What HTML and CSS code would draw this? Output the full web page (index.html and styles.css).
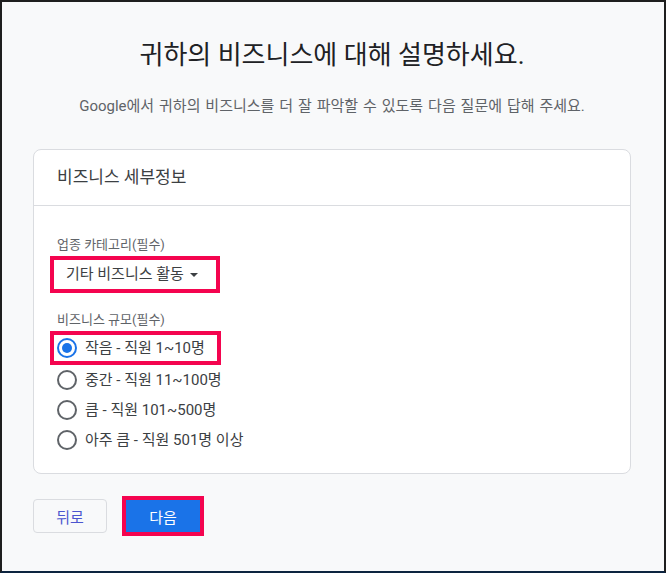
FILE: index.html
```html
<!DOCTYPE html>
<html lang="ko">
<head>
<meta charset="utf-8">
<title>비즈니스 세부정보</title>
<link rel="stylesheet" href="styles.css">
</head>
<body>
<div class="frame">
  <h1 class="title">귀하의 비즈니스에 대해 설명하세요.</h1>
  <p class="subtitle">Google에서 귀하의 비즈니스를 더 잘 파악할 수 있도록 다음 질문에 답해 주세요.</p>

  <section class="card">
    <div class="card-header">비즈니스 세부정보</div>
    <div class="card-body">
      <div class="label">업종 카테고리(필수)</div>
      <div class="highlight dropdown">
        <span class="dropdown-text">기타 비즈니스 활동</span>
        <span class="caret"></span>
      </div>

      <div class="label label-size">비즈니스 규모(필수)</div>
      <div class="highlight radio-box">
        <div class="radio-row">
          <span class="radio checked"></span>
          <span class="radio-text">작음 - 직원 1~10명</span>
        </div>
      </div>
      <div class="radio-row">
        <span class="radio"></span>
        <span class="radio-text">중간 - 직원 11~100명</span>
      </div>
      <div class="radio-row">
        <span class="radio"></span>
        <span class="radio-text">큼 - 직원 101~500명</span>
      </div>
      <div class="radio-row">
        <span class="radio"></span>
        <span class="radio-text">아주 큼 - 직원 501명 이상</span>
      </div>
    </div>
  </section>

  <div class="actions">
    <button class="btn-back">뒤로</button>
    <div class="highlight next-wrap">
      <button class="btn-next">다음</button>
    </div>
  </div>
</div>
</body>
</html>
```

FILE: styles.css
```css
* { box-sizing: border-box; }

html, body {
  margin: 0;
  padding: 0;
}

body {
  font-family: Roboto, "Noto Sans CJK KR", sans-serif;
  background: #f8f9fa;
}

.frame {
  width: 666px;
  height: 573px;
  border: 2px solid #1e1e1e;
  border-bottom-color: #0c2440;
  background: #f8f9fa;
  padding: 37px 33px 0 31px;
  overflow: hidden;
}

.title {
  margin: 0;
  font-size: 26px;
  line-height: 32px;
  font-weight: 400;
  color: #202124;
  text-align: center;
}

.subtitle {
  margin: 25px 0 0;
  font-size: 15px;
  line-height: 20px;
  color: #5f6368;
  text-align: center;
  word-spacing: 1.2px;
}

.card {
  margin-top: 33px;
  width: 598px;
  background: #fff;
  border: 1px solid #dadce0;
  border-radius: 8px;
}

.card-header {
  padding: 15px 23px 16px;
  font-size: 17px;
  line-height: 24px;
  color: #3c4043;
  border-bottom: 1px solid #dadce0;
}

.card-body {
  padding: 31px 23px 18px;
}

.label {
  font-size: 13px;
  line-height: 16px;
  color: #5f6368;
}

.label-size {
  margin-top: 19px;
}

.highlight {
  border: 4px solid #f4044f;
  margin-left: -7px;
}

.dropdown {
  display: inline-flex;
  align-items: center;
  margin-top: 3px;
  height: 37px;
  padding: 0 18px 0 12px;
  gap: 6px;
}

.dropdown-text {
  font-size: 15px;
  line-height: 29px;
  color: #3c4043;
}

.caret {
  width: 0;
  height: 0;
  border-left: 4px solid transparent;
  border-right: 4px solid transparent;
  border-top: 4px solid #3c4043;
  margin-top: 1px;
}

.radio-box {
  display: block;
  width: 171px;
  height: 34px;
  margin-top: 3px;
  padding-left: 3px;
}

.radio-box .radio-row {
  height: 26px;
}

.radio-row {
  display: flex;
  align-items: center;
  height: 30px;
  gap: 8px;
}

.radio {
  width: 20px;
  height: 20px;
  border: 2px solid #5f6368;
  border-radius: 50%;
  flex: none;
  display: flex;
  align-items: center;
  justify-content: center;
}

.radio.checked {
  border-color: #1a73e8;
}

.radio.checked::after {
  content: "";
  width: 10px;
  height: 10px;
  border-radius: 50%;
  background: #1a73e8;
}

.radio-text {
  font-size: 15px;
  line-height: 20px;
  color: #3c4043;
  white-space: nowrap;
}

.actions {
  display: flex;
  align-items: center;
  margin-top: 22px;
  gap: 15px;
}

.btn-back {
  width: 74px;
  height: 34px;
  border: 1px solid #dadce0;
  border-radius: 4px;
  background: #f8f9fa;
  color: #4b55cf;
  font-family: Roboto, "Noto Sans CJK KR", sans-serif;
  font-size: 15px;
  padding: 0;
}

.next-wrap {
  margin-left: 0;
  display: flex;
}

.btn-next {
  width: 74px;
  height: 32px;
  border: none;
  border-radius: 0;
  background: #1a73e8;
  color: #fff;
  font-family: Roboto, "Noto Sans CJK KR", sans-serif;
  font-size: 15px;
  padding: 0;
}
```
